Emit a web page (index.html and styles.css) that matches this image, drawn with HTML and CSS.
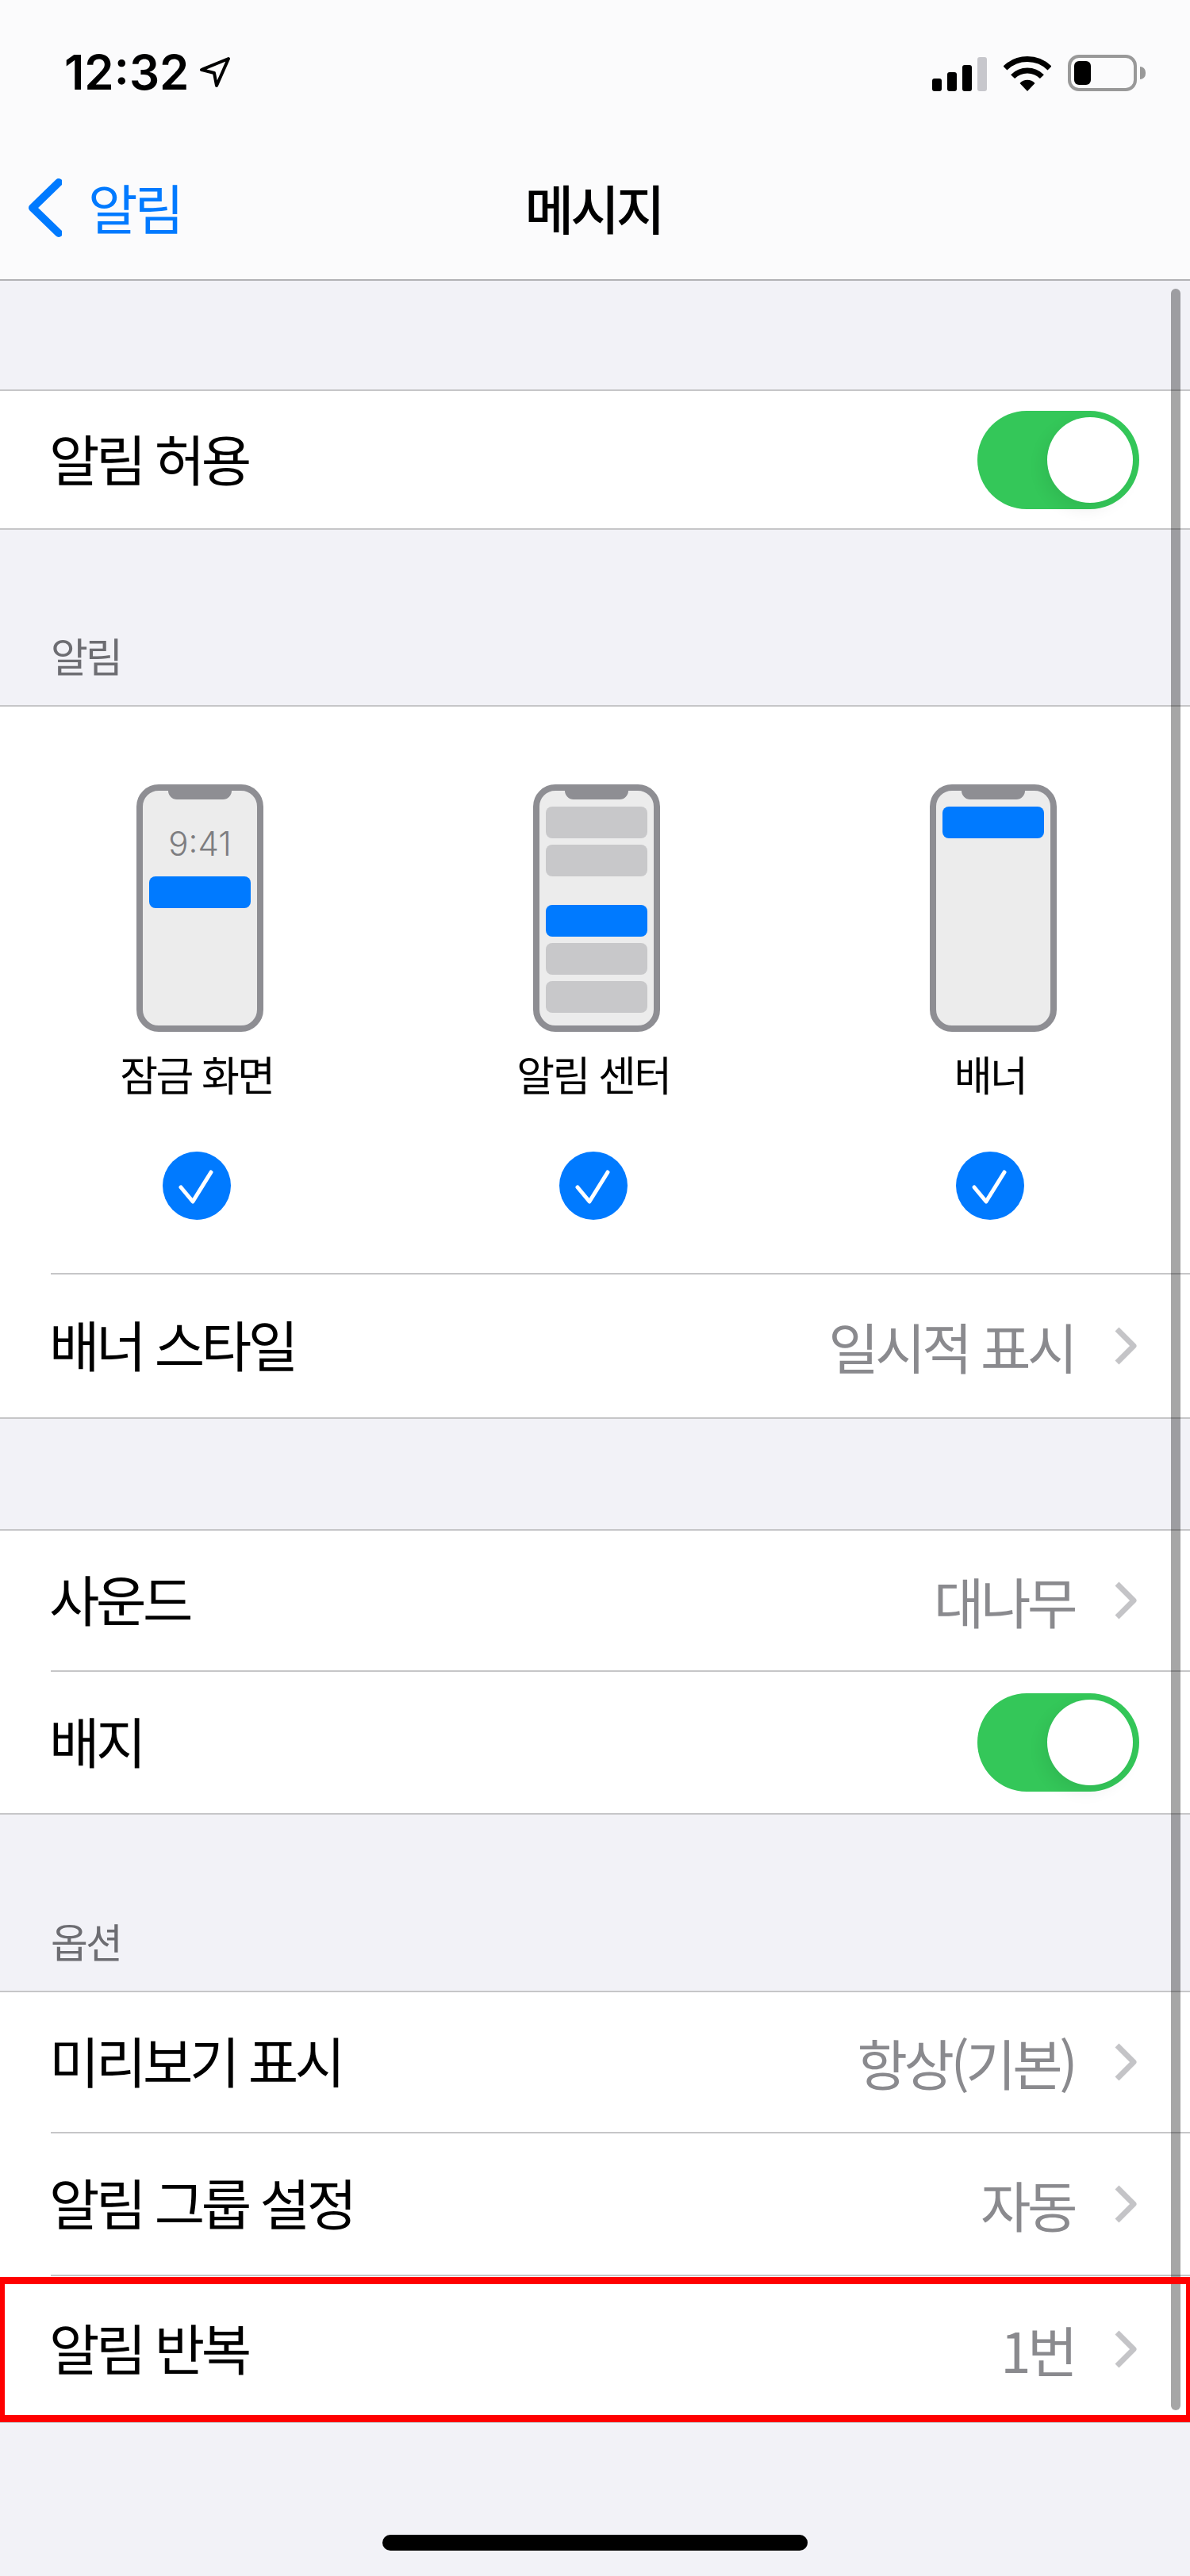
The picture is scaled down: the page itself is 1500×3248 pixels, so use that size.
FILE: index.html
```html
<!DOCTYPE html>
<html lang="ko">
<head>
    <meta charset="UTF-8">
    <meta name="viewport" content="width=device-width, initial-scale=1.0">
    <title>메시지</title>
    <link rel="stylesheet" href="styles.css">
</head>
<body>
    <div id="screen">
        <header id="top-bar">
            <div class="status-bar">
                <div class="status-left">
                    <span class="clock">12:32</span>
                    <svg class="location-arrow" width="40" height="40" viewBox="0 0 40 40"><path d="M37 3 L3 17 L19 21 L22 37 Z" fill="none" stroke="#000" stroke-width="4" stroke-linejoin="round"/></svg>
                </div>
                <div class="status-right">
                    <div class="signal">
                        <span class="signal-bar bar-1"></span>
                        <span class="signal-bar bar-2"></span>
                        <span class="signal-bar bar-3"></span>
                        <span class="signal-bar bar-4"></span>
                    </div>
                    <svg class="wifi" width="60" height="46" viewBox="0 0 60 46">
                        <path d="M30 46 L20.5 36 A13 13 0 0 1 39.5 36 Z" fill="#000"/>
                        <path d="M11.6 27.6 A26 26 0 0 1 48.4 27.6" fill="none" stroke="#000" stroke-width="7"/>
                        <path d="M2 17 A40 40 0 0 1 58 17" fill="none" stroke="#000" stroke-width="7"/>
                    </svg>
                    <div class="battery">
                        <div class="battery-body"><span class="battery-level"></span></div>
                        <span class="battery-cap"></span>
                    </div>
                </div>
            </div>
            <nav class="nav-bar">
                <div class="nav-back">
                    <svg width="44" height="78" viewBox="0 0 44 78"><path d="M40 7 L7 39 L40 71" fill="none" stroke="#007aff" stroke-width="10" stroke-linecap="round" stroke-linejoin="round"/></svg>
                    <span class="nav-back-label">알림</span>
                </div>
                <div class="nav-title">메시지</div>
            </nav>
        </header>

        <section class="group first-group">
            <div class="row">
                <span class="row-label">알림 허용</span>
                <div class="toggle"><span class="knob"></span></div>
            </div>
        </section>

        <div class="section-title">알림</div>
        <section class="group">
            <div class="alert-styles">
                <div class="alert-style">
                    <div class="phone">
                        <div class="phone-screen">
                            <div class="phone-time">9:41</div>
                            <div class="mini-bar blue"></div>
                        </div>
                    </div>
                    <div class="style-label">잠금 화면</div>
                    <svg class="check" width="86" height="86" viewBox="0 0 86 86"><circle cx="43" cy="43" r="43" fill="#007aff"/><path d="M23 45 L38 63 L61 26" fill="none" stroke="#fff" stroke-width="5" stroke-linecap="round" stroke-linejoin="round"/></svg>
                </div>
                <div class="alert-style">
                    <div class="phone">
                        <div class="phone-screen stack">
                            <div class="mini-bar"></div>
                            <div class="mini-bar"></div>
                            <div class="mini-bar blue after-gap"></div>
                            <div class="mini-bar"></div>
                            <div class="mini-bar"></div>
                        </div>
                    </div>
                    <div class="style-label">알림 센터</div>
                    <svg class="check" width="86" height="86" viewBox="0 0 86 86"><circle cx="43" cy="43" r="43" fill="#007aff"/><path d="M23 45 L38 63 L61 26" fill="none" stroke="#fff" stroke-width="5" stroke-linecap="round" stroke-linejoin="round"/></svg>
                </div>
                <div class="alert-style">
                    <div class="phone">
                        <div class="phone-screen stack">
                            <div class="mini-bar blue"></div>
                        </div>
                    </div>
                    <div class="style-label">배너</div>
                    <svg class="check" width="86" height="86" viewBox="0 0 86 86"><circle cx="43" cy="43" r="43" fill="#007aff"/><path d="M23 45 L38 63 L61 26" fill="none" stroke="#fff" stroke-width="5" stroke-linecap="round" stroke-linejoin="round"/></svg>
                </div>
            </div>
            <div class="row inset tall">
                <span class="row-label">배너 스타일</span>
                <div class="row-value">일시적 표시
                    <svg class="chevron" width="30" height="50" viewBox="0 0 30 50"><path d="M4 4 L25 25 L4 46" fill="none" stroke="#c4c4c7" stroke-width="7" stroke-linejoin="round"/></svg>
                </div>
            </div>
        </section>

        <section class="group spaced-group">
            <div class="row">
                <span class="row-label">사운드</span>
                <div class="row-value">대나무
                    <svg class="chevron" width="30" height="50" viewBox="0 0 30 50"><path d="M4 4 L25 25 L4 46" fill="none" stroke="#c4c4c7" stroke-width="7" stroke-linejoin="round"/></svg>
                </div>
            </div>
            <div class="row inset">
                <span class="row-label">배지</span>
                <div class="toggle"><span class="knob"></span></div>
            </div>
        </section>

        <div class="section-title">옵션</div>
        <section class="group">
            <div class="row">
                <span class="row-label">미리보기 표시</span>
                <div class="row-value">항상(기본)
                    <svg class="chevron" width="30" height="50" viewBox="0 0 30 50"><path d="M4 4 L25 25 L4 46" fill="none" stroke="#c4c4c7" stroke-width="7" stroke-linejoin="round"/></svg>
                </div>
            </div>
            <div class="row inset">
                <span class="row-label">알림 그룹 설정</span>
                <div class="row-value">자동
                    <svg class="chevron" width="30" height="50" viewBox="0 0 30 50"><path d="M4 4 L25 25 L4 46" fill="none" stroke="#c4c4c7" stroke-width="7" stroke-linejoin="round"/></svg>
                </div>
            </div>
            <div class="row inset last-row">
                <span class="row-label">알림 반복</span>
                <div class="row-value">1번
                    <svg class="chevron" width="30" height="50" viewBox="0 0 30 50"><path d="M4 4 L25 25 L4 46" fill="none" stroke="#c4c4c7" stroke-width="7" stroke-linejoin="round"/></svg>
                </div>
            </div>
        </section>

        <div class="scroll-thumb"></div>
        <div class="highlight-box"></div>
        <div class="home-indicator"></div>
    </div>
</body>
</html>
```

FILE: styles.css
```css
body {
    margin: 0;
    padding: 0;
    background-color: #f2f2f7;
    font-family: "Noto Sans CJK KR", "Noto Sans", sans-serif;
    color: #000;
}

#screen {
    position: relative;
    width: 1500px;
    height: 3248px;
    overflow: hidden;
}

#top-bar {
    height: 352px;
    background-color: #fbfbfc;
    border-bottom: 2px solid #b2b2b5;
}

.status-bar {
    display: flex;
    justify-content: space-between;
    height: 120px;
    padding: 0 56px 0 81px;
}

.status-left {
    display: flex;
    align-items: center;
    gap: 13px;
    padding-top: 62px;
    height: 58px;
}

.clock {
    font-family: Inter, sans-serif;
    font-size: 60px;
    font-weight: 600;
    line-height: 58px;
}

.status-right {
    display: flex;
    align-items: flex-end;
    height: 115px;
}

.signal {
    display: flex;
    align-items: flex-end;
    gap: 7px;
}

.signal-bar {
    width: 12px;
    background-color: #000;
    border-radius: 3px;
}

.bar-1 { height: 16px; }
.bar-2 { height: 24px; }
.bar-3 { height: 33px; }
.bar-4 { height: 43px; background-color: #c7c7cc; }

.wifi {
    margin: 0 21px;
}

.battery {
    display: flex;
    align-items: center;
    gap: 4px;
}

.battery-body {
    box-sizing: border-box;
    width: 87px;
    height: 46px;
    padding: 4px;
    border: 4px solid #999;
    border-radius: 14px;
}

.battery-level {
    display: block;
    width: 21px;
    height: 30px;
    background-color: #000;
    border-radius: 6px;
}

.battery-cap {
    width: 7px;
    height: 16px;
    background-color: #999;
    border-radius: 0 8px 8px 0;
}

.nav-bar {
    box-sizing: border-box;
    display: grid;
    grid-template-columns: 1fr auto 1fr;
    align-items: center;
    height: 232px;
    padding-top: 52px;
}

.nav-back {
    display: flex;
    align-items: center;
    gap: 33px;
    padding-left: 34px;
    height: 78px;
    color: #007aff;
    font-size: 68px;
    letter-spacing: -4px;
}

.nav-back-label {
    margin-bottom: 4px;
}

.nav-title {
    margin: 0 4px 4px 0;
    font-size: 67px;
    font-weight: 500;
    letter-spacing: -4px;
}

.group {
    background-color: #fff;
    border-top: 2px solid #c6c6c8;
    border-bottom: 2px solid #c6c6c8;
}

.first-group {
    margin-top: 137px;
}

.spaced-group {
    margin-top: 139px;
    margin-bottom: 1px;
}

.row {
    display: flex;
    justify-content: space-between;
    align-items: center;
    position: relative;
    height: 176px;
    padding: 0 64px 0 62px;
    font-size: 69px;
    letter-spacing: -4.5px;
}

.row-label {
    margin-bottom: 6px;
}

.first-group .row {
    height: 173px;
}

.row.inset {
    height: 178px;
    margin-top: 2px;
}

.row.tall {
    height: 180px;
}

.row.last-row {
    height: 183px;
}

.row.inset::before {
    content: "";
    position: absolute;
    top: -2px;
    left: 64px;
    right: 0;
    height: 2px;
    background-color: #c6c6c8;
}

.row-value {
    display: flex;
    align-items: center;
    gap: 50px;
    margin-right: 2px;
    color: #8a8a8e;
    white-space: nowrap;
}

.chevron {
    flex: none;
}

.toggle {
    display: flex;
    justify-content: flex-end;
    align-items: center;
    box-sizing: border-box;
    width: 204px;
    height: 124px;
    padding: 8px;
    border-radius: 62px;
    background-color: #34c759;
}

.knob {
    width: 108px;
    height: 108px;
    border-radius: 50%;
    background-color: #fff;
    box-shadow: -6px 8px 20px rgba(0, 0, 0, 0.07);
}

.section-title {
    box-sizing: border-box;
    height: 221px;
    padding: 122px 64px 0;
    color: #6d6d72;
    font-size: 51px;
    line-height: 72px;
    letter-spacing: -3px;
}

.alert-styles {
    display: grid;
    grid-template-columns: repeat(3, 500px);
    height: 714px;
    margin-left: -2px;
}

.alert-style {
    display: flex;
    flex-direction: column;
    align-items: center;
}

.phone {
    box-sizing: border-box;
    position: relative;
    width: 160px;
    height: 312px;
    margin: 98px 0 0 8px;
    border: 8px solid #8e8e93;
    border-radius: 28px;
    background-color: #ececec;
}

.phone::before {
    content: "";
    position: absolute;
    top: 0;
    left: 32px;
    width: 80px;
    height: 11px;
    background-color: #8e8e93;
    border-radius: 0 0 12px 12px;
}

.phone-screen {
    display: flex;
    flex-direction: column;
    padding: 47px 8px 0;
}

.phone-screen.stack {
    gap: 8px;
    padding-top: 20px;
}

.phone-time {
    height: 40px;
    margin-bottom: 21px;
    color: #7d7d80;
    font-family: Inter, sans-serif;
    font-size: 42px;
    font-weight: 300;
    line-height: 40px;
    text-align: center;
}

.mini-bar {
    height: 40px;
    border-radius: 8px;
    background-color: #c8c8ca;
}

.mini-bar.blue {
    background-color: #007aff;
}

.mini-bar.after-gap {
    margin-top: 28px;
}

.style-label {
    height: 60px;
    margin-top: 23px;
    font-size: 52px;
    line-height: 60px;
    letter-spacing: -2.5px;
}

.check {
    margin-top: 68px;
}

.scroll-thumb {
    position: absolute;
    top: 364px;
    left: 1476px;
    width: 12px;
    height: 2675px;
    border-radius: 6px;
    background-color: rgba(0, 0, 0, 0.35);
}

.highlight-box {
    position: absolute;
    top: 2871px;
    left: 0;
    width: 1500px;
    height: 183px;
    box-sizing: border-box;
    border-style: solid;
    border-color: #ff0000;
    border-width: 9px 5px 9px 6px;
}

.home-indicator {
    position: absolute;
    top: 3196px;
    left: 482px;
    width: 536px;
    height: 20px;
    border-radius: 10px;
    background-color: #000;
}
```
